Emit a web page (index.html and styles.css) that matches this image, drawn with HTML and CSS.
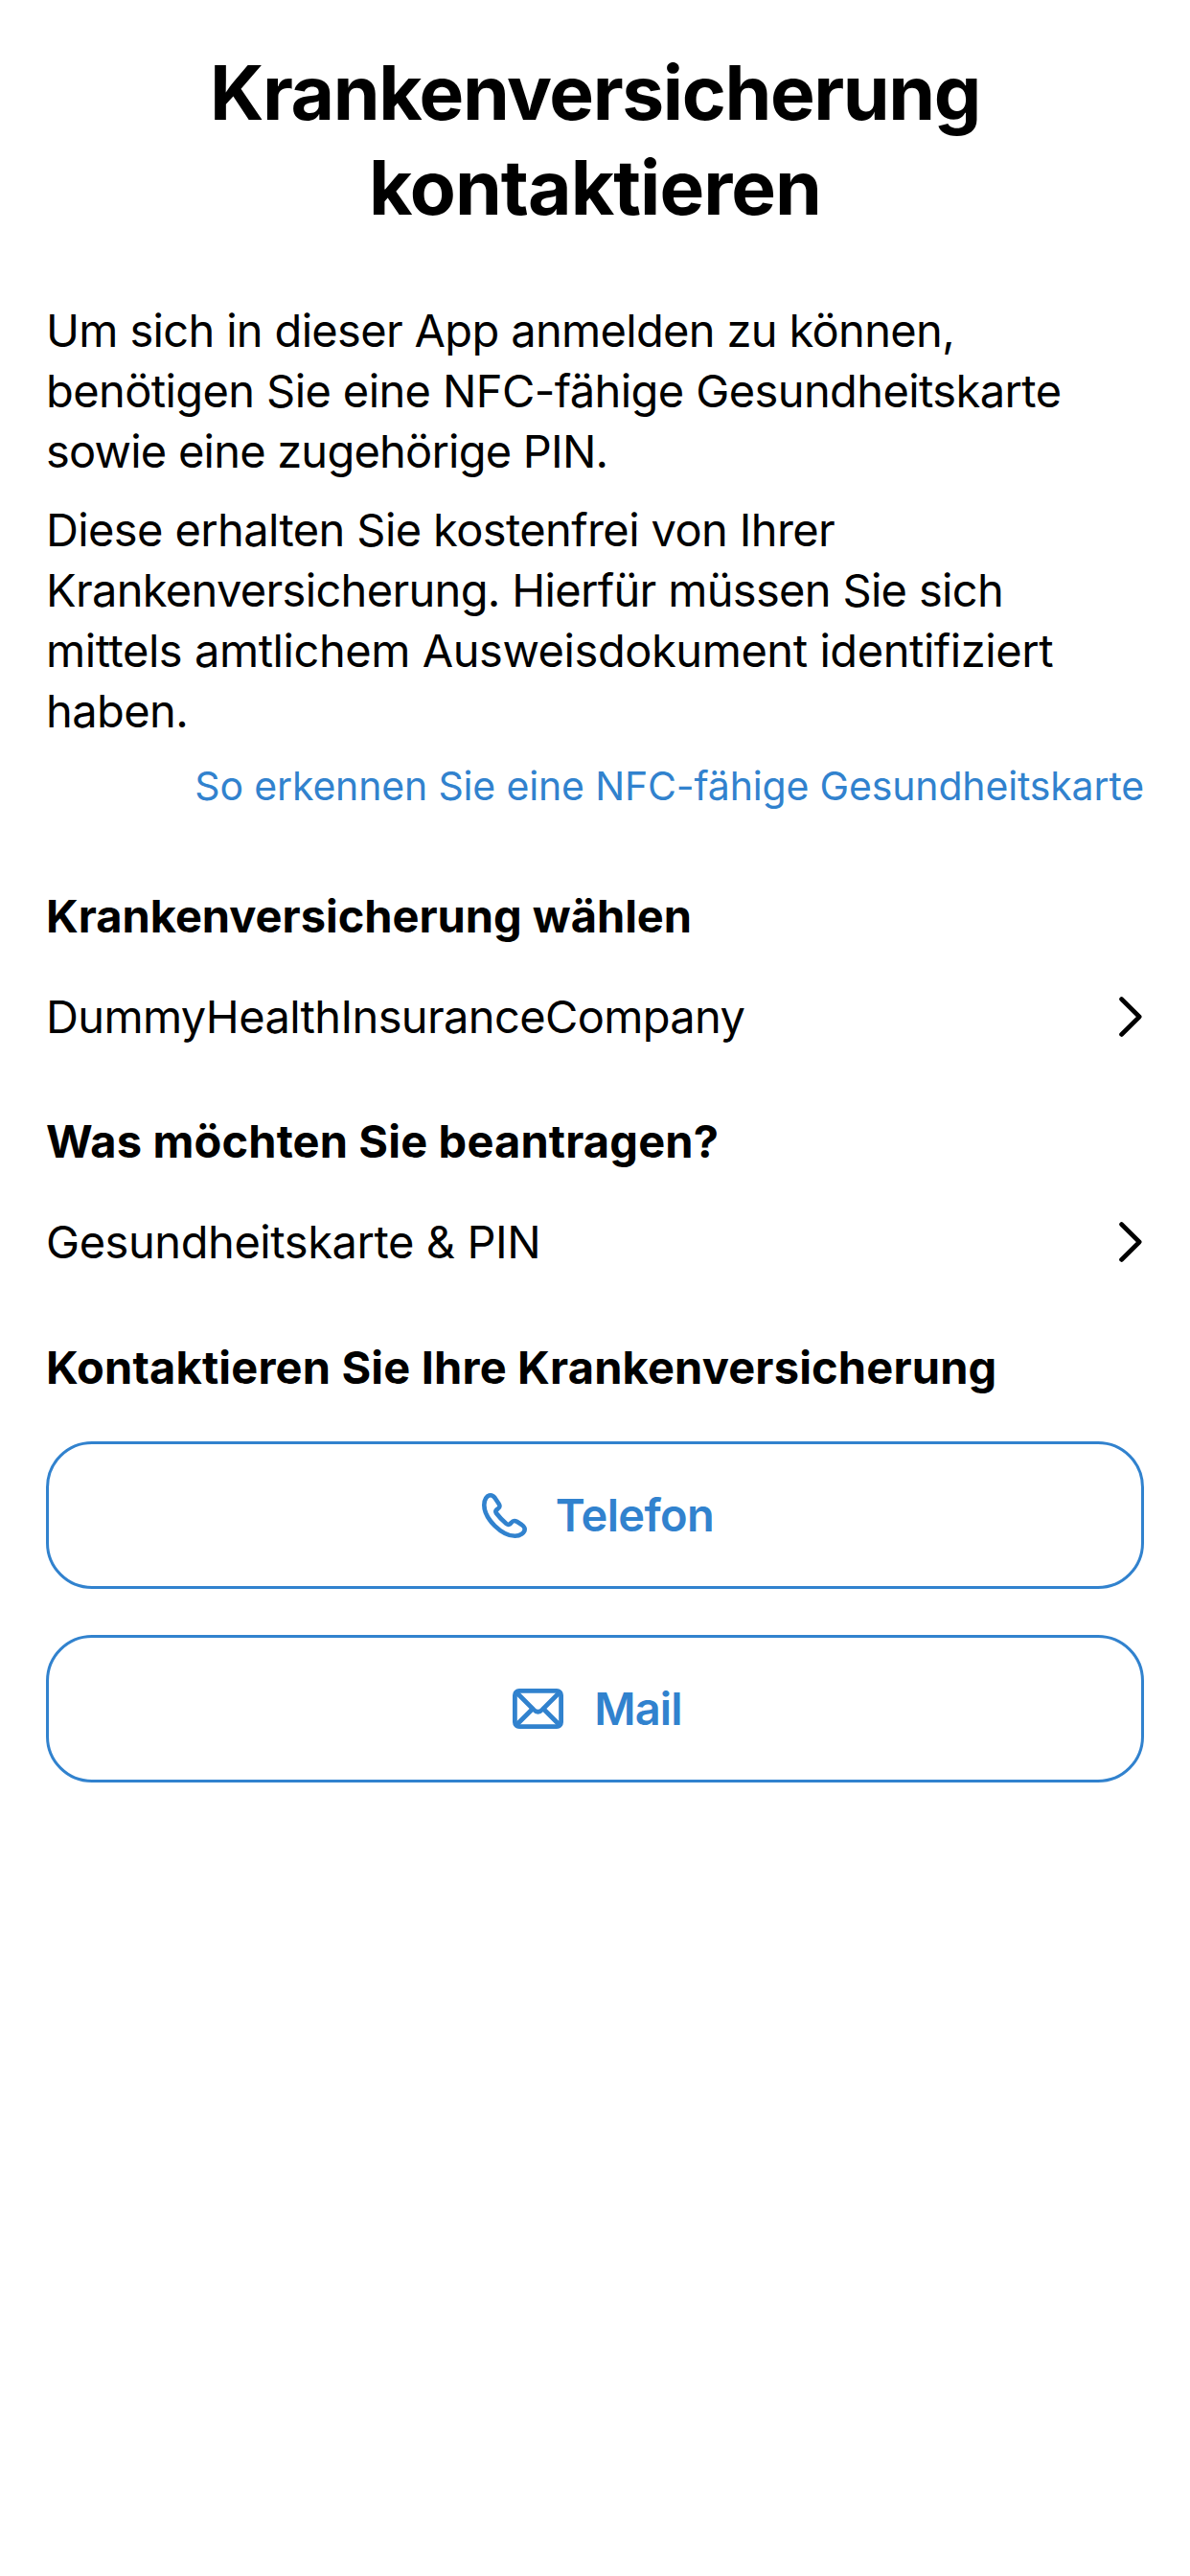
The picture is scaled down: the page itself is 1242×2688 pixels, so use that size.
FILE: index.html
```html
<!DOCTYPE html>
<html lang="de">
<head>
<meta charset="utf-8">
<title>Krankenversicherung kontaktieren</title>
<link rel="stylesheet" href="styles.css">
</head>
<body>
<main class="page">
  <h1 class="title"><span class="t1">Krankenversicherung</span><br><span class="t2">kontaktieren</span></h1>
  <p class="text"><span class="a1">Um sich in dieser App anmelden zu können,</span><br><span class="a2">benötigen Sie eine NFC-fähige Gesundheitskarte</span><br><span class="a3">sowie eine zugehörige PIN.</span></p>
  <p class="text"><span class="b1">Diese erhalten Sie kostenfrei von Ihrer</span><br><span class="b2">Krankenversicherung. Hierfür müssen Sie sich</span><br><span class="b3">mittels amtlichem Ausweisdokument identifiziert</span><br><span class="b4">haben.</span></p>
  <a class="link">So erkennen Sie eine NFC-fähige Gesundheitskarte</a>
  <h2 class="heading h1">Krankenversicherung wählen</h2>
  <div class="row row-insurance"><span class="r1">DummyHealthInsuranceCompany</span>
    <svg class="chevron" viewBox="0 0 24 42"><path d="M2.5 2.5 21.2 21 2.5 39.5"/></svg></div>
  <h2 class="heading h2">Was möchten Sie beantragen?</h2>
  <div class="row"><span class="r2">Gesundheitskarte &amp; PIN</span>
    <svg class="chevron" viewBox="0 0 24 42"><path d="M2.5 2.5 21.2 21 2.5 39.5"/></svg></div>
  <h2 class="heading h3">Kontaktieren Sie Ihre Krankenversicherung</h2>
  <div class="actions">
    <button class="button"><svg class="phone" viewBox="0 0 47 47"><path d="M9 2.3C5 2.3 2.3 7 2.3 12.5C2.3 27 21 44.7 34.5 44.7C40 44.7 44.7 41.5 44.7 37.5C44.7 35.5 43.5 34.5 41.5 33L36.5 29.8C34 28.3 32.5 28.5 30.5 31C29 33 27.5 33.5 25.5 32C22 29 18 25 15 21C13.7 19.2 14.3 18 16.5 16.5C19 15 19 13.5 17.5 11L13.5 5C12 3 11 2.3 9 2.3Z"/></svg><span class="tel">Telefon</span></button>
    <button class="button button-mail"><svg class="mail" viewBox="0 0 53 42"><rect x="2.4" y="2.4" width="48.2" height="37.2" rx="4.5"/><path d="M4 4 21.5 21.5Q26.5 27 31.5 21.5L49 4M4 38 19.5 22.5M49 38 33.5 22.5"/></svg><span class="ml">Mail</span></button>
  </div>
</main>
</body>
</html>
```
FILE: styles.css
```css
* { box-sizing: border-box; }
body { margin: 0; background: #fff; color: #000; font-family: Inter, sans-serif; }
.page { padding: 47px 48px 0; }
.title { margin: 0 0 68px; text-align: center; font-size: 78.5px; line-height: 99px; font-weight: 700; }
.t1 { letter-spacing: -1.4px; }
.t2 { letter-spacing: -.95px; }
.text { margin: 0 0 19px; font-size: 47px; line-height: 63px; white-space: nowrap; }
.a1 { letter-spacing: -.66px; }
.a2 { letter-spacing: -.6px; }
.a3 { letter-spacing: -.78px; }
.b1 { letter-spacing: -.61px; }
.b2 { letter-spacing: -.67px; }
.b3 { letter-spacing: -.44px; }
.b4 { letter-spacing: -.6px; }
.link { display: block; margin-top: 19px; text-align: right; color: #3182ce; font-size: 41px; line-height: 56px; letter-spacing: -.16px; white-space: nowrap; }
.heading { margin: 0; font-size: 47px; line-height: 60px; font-weight: 700; white-space: nowrap; }
.h1 { margin-top: 78px; letter-spacing: -.03px; }
.h2 { letter-spacing: .15px; }
.h3 { letter-spacing: .16px; }
.row { height: 176px; padding-bottom: 26px; display: flex; align-items: center; justify-content: space-between; font-size: 47px; line-height: 60px; }
.row-insurance { height: 175px; padding-bottom: 25px; }
.r1 { letter-spacing: -.63px; }
.r2 { letter-spacing: -.43px; }
.chevron { width: 24px; height: 42px; margin-right: 2.5px; fill: none; stroke: #000; stroke-width: 4.6; stroke-linecap: round; stroke-linejoin: round; }
.actions { display: grid; gap: 48px; margin-top: 47px; }
.button { height: 154px; border: 3px solid #3182ce; border-radius: 48px; background: #fff; color: #3182ce; display: flex; align-items: center; justify-content: center; font: 600 47px/60px Inter, sans-serif; gap: 30px; padding: 0 0 0 6px; }
.button-mail { gap: 32px; padding-left: 5px; }
.tel { letter-spacing: -.6px; }
.ml { letter-spacing: -.8px; }
.button svg { fill: none; stroke: currentColor; stroke-linejoin: round; stroke-linecap: round; }
.phone { width: 47px; height: 47px; stroke-width: 4.6; }
.mail { width: 53px; height: 42px; stroke-width: 4.8; }
```
